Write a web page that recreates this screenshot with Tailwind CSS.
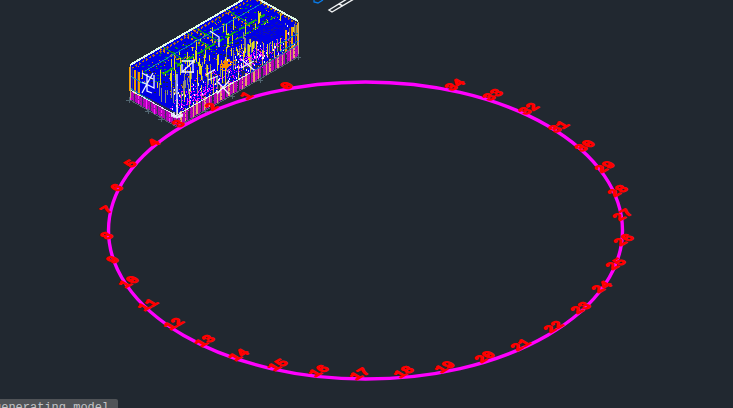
<!DOCTYPE html>
<html lang="en">
<head>
<meta charset="utf-8">
<meta name="viewport" content="width=device-width, initial-scale=1">
<title>Model viewport</title>
<script src="https://cdn.jsdelivr.net/npm/@tailwindcss/browser@4"></script>
</head>
<body class="bg-[#212830]">
<main class="relative flex h-screen flex-col overflow-hidden">
  <svg class="min-h-0 w-full flex-1" viewBox="0 0 733 408" preserveAspectRatio="xMidYMid slice" role="img" aria-label="Isometric building with a ring of numbered points">
    <g fill="none" stroke-width="1">
      <path d="M314 0V2L318 3L323 0" stroke="#0a7be8" stroke-width="1.3"/>
      <path d="M347 -1L329 10L332 12L354 -1M339 4L343 6" stroke="#f1f3f4" stroke-width="1.4"/>
    </g>
    <g id="building" shape-rendering="crispEdges"></g>
    <ellipse cx="365.5" cy="230.5" rx="257" ry="148.5" fill="none" stroke="#ff00ff" stroke-width="3.4"/>
    <g id="labels" fill="#ff0000" stroke="#ff0000" stroke-width="1.8" stroke-linejoin="round" text-anchor="middle" font-size="14" font-family="'Liberation Mono', monospace"></g>
  </svg>
  <div class="absolute bottom-0 left-0 h-[9px] overflow-hidden rounded-tr-xs bg-[#505357] pr-[9px]">
    <p class="-ml-1.5 whitespace-nowrap pt-0.5 font-['Liberation_Mono',monospace] text-[12px] leading-[14px] text-[#c3c5c7]">generating model</p>
  </div>
</main>
<script>
const NS = 'http://www.w3.org/2000/svg';
function add(parent, tag, attrs, text) {
  const el = document.createElementNS(NS, tag);
  for (const k in attrs) el.setAttribute(k, attrs[k]);
  if (text !== undefined) el.textContent = text;
  parent.appendChild(el);
  return el;
}

// Ring points, index = printed number
const points = [
  [287,86],[247,96],[212,107],[179,124],[154,143],[131,164],[117,188],[107,210],[107,236],[113,260],
  [129,282],[148,305],[174,324],[205,341],[239,355],[278,365],[319,371],[360,374],[404,372],[445,367],
  [485,357],[521,345],[554,327],[581,308],[602,287],[616,264],[624,240],[623,215],[618,191],[605,167],
  [585,146],[559,127],[529,109],[493,95],[455,85]
];
const labels = document.getElementById('labels');
points.forEach(([x, y], n) =>
  add(labels, 'text', { transform: `matrix(.866 -.5 .866 .5 ${x} ${y})`, y: 4 }, n));

// Building: u runs along the long side, v along the short side, z downwards
const b = document.getElementById('building');
let seed = 11;
const rnd = () => (seed = (seed * 16807) % 2147483647) / 2147483647;
const iso = (u, v, z) => [Math.round(130 + 121 * u + 47 * v), Math.round(64 - 70 * u + 27 * v + z)];
const poly = (pts, fill) => add(b, 'polygon', { points: pts.map(p => iso(...p).join()).join(' '), fill });
const line = (pts, stroke, w = 1, extra = {}) =>
  add(b, 'polyline', { points: pts.map(p => iso(...p).join()).join(' '), stroke, 'stroke-width': w, fill: 'none', ...extra });
function dots(count, color, at, w, h) {
  let d = '';
  for (let i = 0; i < count; i++) {
    const [x, y] = iso(...at());
    const hh = typeof h === 'function' ? h() : h;
    d += `M${x} ${y}h${w}v${hh}h-${w}z`;
  }
  add(b, 'path', { d, fill: color });
}

poly([[0,0,0],[1,0,0],[1,1,0],[1,1,36],[0,1,36],[0,0,36]], '#262b50');
poly([[0,0,1],[1,0,1],[1,1,3],[1,1,10],[0,1,22],[0,0,24]], '#0000e6');
dots(420, '#0000e6', () => [rnd(), 1, rnd() * 18 + 5], 2, 2);

// Lower storey band with its columns
poly([[0,0,27],[0,1,25],[1,1,23],[1,1,35],[0,1,35],[0,0,35]], '#b800bb');
for (let i = 0; i < 30; i++) {
  const u = i / 30;
  line([[u,1,22],[u,1,35]], i % 3 ? '#e8a06a' : '#28304a', i % 2 ? 2 : 1);
  if (i % 3 === 0) line([[u,1,8],[u,1,24]], '#d8c040', 1);
}
for (let i = 0; i < 12; i++) line([[0,i/12,25],[0,i/12,36]], i % 2 ? '#432a65' : '#ff20ff');
for (const z of [27, 31]) line([[0,0,z],[0,1,z],[1,1,z]], '#762f86', 1, { 'stroke-dasharray': '1 2' });

// Interior noise
dots(320, '#ff00ff', () => [rnd(), .75 + rnd() * .25, 9 + rnd() * 20], 1, 1);
dots(190, '#e88200', () => [rnd(), rnd(), rnd() * 16], 1, 1);
dots(210, '#202838', () => [rnd(), rnd(), rnd() * 18], 2, 1);
dots(110, '#0b8c20', () => [rnd(), rnd() * .6, 2 + rnd() * 7], 2, 1);
dots(110, '#f2f0ff', () => [rnd(), .8 + rnd() * .2, 2 + rnd() * 23], 1, 2);
dots(95, '#e0d820', () => [rnd(), .15 + rnd() * .8, rnd() * 12], 1, () => 4 + Math.floor(rnd() * 13));
dots(60, '#8b8b78', () => [rnd(), .6 + rnd() * .4, rnd() * 10], 1, () => 5 + Math.floor(rnd() * 10));
dots(90, '#ff10ff', () => [.55 + rnd() * .2, .86 + rnd() * .14, 9 + rnd() * 8], 1, 1);
dots(90, '#ff10ff', () => [.05 + rnd() * .3, .9, 18 + rnd() * 8], 1, 1);
dots(75, '#f58a00', () => [.4 + rnd() * .09, .85 + rnd() * .1, 3 + rnd() * 6], 2, 1);
poly([[.66,.7,0],[.94,.7,1],[.94,1,5],[.75,1,5]], '#0000e8');
dots(50, '#1717a0', () => [.68 + rnd() * .25, .72 + rnd() * .25, 2], 2, 1);

// Roof grid
for (const u of [.25, .45, .52, .78]) {
  line([[u,0,2],[u,.55,2]], '#d48415', 2, { 'stroke-dasharray': '2 2' });
  line([[u+.02,0,2],[u+.02,.5,2]], '#0faa12', 1);
}
line([[.03,.25,2],[.97,.25,2]], '#0e86b4', 1);
line([[.08,.5,2],[.93,.5,2]], '#13a51b', 2, { 'stroke-dasharray': '12 4 6 2' });
line([[.55,.65,2],[.99,.65,2]], '#18a818', 1, { 'stroke-dasharray': '7 3' });
line([[0,.04,3],[1,.04,3],[1,.95,3]], '#b26a15', 2, { 'stroke-dasharray': '2 2' });

// End walls
for (let i = 0; i < 5; i++) {
  line([[0,i*.05,3],[0,i*.05,27]], i % 2 ? '#37406b' : '#f09b00', i % 2 ? 1 : 2);
  line([[1-i*.025,1,2],[1-i*.025,1,24]], i % 2 ? '#6a5640' : '#f0a000', i % 2 ? 1 : 2);
}
line([[0,0,12],[0,.3,12],[0,.35,9]], '#1685bd', 1);
line([[0,0,24],[0,.45,25]], '#1685bd', 1);
line([[.85,1,12],[1,1,12]], '#1685bd', 1);
line([[.85,1,20],[1,1,20]], '#1685bd', 1);

// Edges and base
line([[0,0,36],[0,1,36],[1,1,36]], '#59606e', 1);
line([[0,0,26],[0,1,25]], '#dfe8ee', 1);
line([[0,1,24],[.6,1,24]], '#d5f2ee', 1);
line([[.6,1,24],[1,1,24]], '#3479aa', 1);
line([[0,0,1],[0,0,34]], '#c9ac74', 1);
line([[1,1,1],[1,1,35]], '#c9ac74', 1);
add(b, 'path', { d: 'M130 65L251 -5L298 21', fill: 'none', stroke: '#e0f8e4', 'stroke-width': 2 });
const white = d => add(b, 'path', { d, fill: 'none', stroke: '#f0f4ff', 'stroke-width': 1.3, 'shape-rendering': 'auto' });
white('M177 74V115M171 114L177 118L183 114M171 116H183M174 112V118M180 112V118');
white('M182 61H194L182 72H194M182 72V64M193 60V73');
white('M217 81L229 94M229 81L217 94M241 59L254 70M254 61L241 68');
white('M142 73L153 79M153 73L142 93M142 82L154 88V75M147 74V91L152 93');
white('M206 75L214 70M208 80L218 76M210 31L219 37V47');
for (const [x, y] of [[129,100],[148,111],[161,119],[205,111],[232,96],[260,80],[298,57]])
  add(b, 'path', { d: `M${x-3} ${y}h6M${x} ${y-3}v6`, stroke: '#526772', fill: 'none' });
</script>
</body>
</html>
